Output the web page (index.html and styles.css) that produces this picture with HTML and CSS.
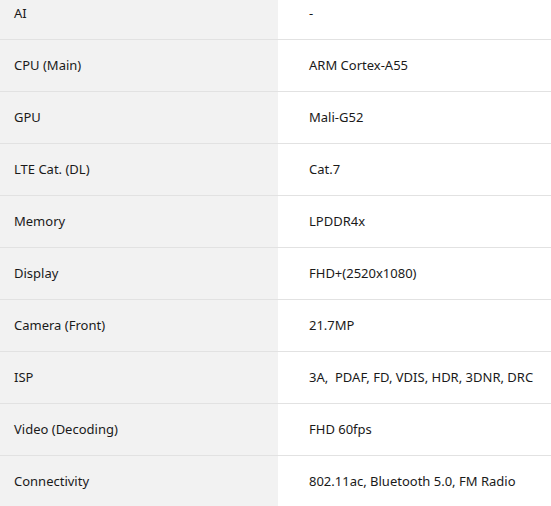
FILE: index.html
```html
<!DOCTYPE html>
<html lang="en">
<head>
<meta charset="utf-8">
<title>Specs</title>
<link rel="stylesheet" href="styles.css">
</head>
<body>
<table class="spec">
<tbody>
<tr><th>AI</th><td>-</td></tr>
<tr><th>CPU (Main)</th><td>ARM Cortex-A55</td></tr>
<tr><th>GPU</th><td>Mali-G52</td></tr>
<tr><th>LTE Cat. (DL)</th><td>Cat.7</td></tr>
<tr><th>Memory</th><td>LPDDR4x</td></tr>
<tr><th>Display</th><td>FHD+(2520x1080)</td></tr>
<tr><th>Camera (Front)</th><td>21.7MP</td></tr>
<tr><th>ISP</th><td>3A,&nbsp; PDAF, FD, VDIS, HDR, 3DNR, DRC</td></tr>
<tr><th>Video (Decoding)</th><td>FHD 60fps</td></tr>
<tr><th>Connectivity</th><td>802.11ac, Bluetooth 5.0, FM Radio</td></tr>
</tbody>
</table>
</body>
</html>
```
FILE: styles.css
```css
html, body {
  margin: 0;
  padding: 0;
  background: #fff;
}
.spec {
  width: 551px;
  border-collapse: collapse;
  margin-top: -13px;
  font-family: "Noto Sans", "Open Sans", sans-serif;
  font-size: 13px;
  color: #1a1a1a;
}
.spec tr {
  height: 52px;
  border-bottom: 1px solid #e2e2e2;
}
.spec th {
  width: 278px;
  box-sizing: border-box;
  background: #f2f2f2;
  text-align: left;
  font-weight: normal;
  padding: 0 0 0 14px;
  vertical-align: middle;
}
.spec td {
  padding: 0 0 0 31px;
  vertical-align: middle;
}
```
